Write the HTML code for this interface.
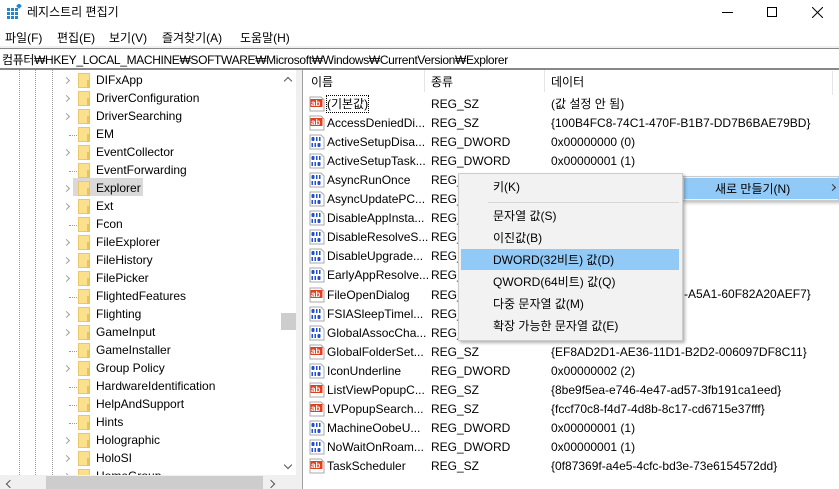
<!DOCTYPE html>
<html><head><meta charset="utf-8">
<style>
*{margin:0;padding:0;box-sizing:border-box}
body{width:839px;height:489px;overflow:hidden;background:#fff;font-family:"Liberation Sans","Noto Sans CJK KR",sans-serif;font-size:12px;color:#000;position:relative}
.a{position:absolute;white-space:nowrap}
.t{line-height:18px}
.fold{position:absolute;width:12px;height:15px;background:#fbe18e;border:1px solid #ecc862}
.fold:after{content:"";position:absolute;right:-1px;bottom:-1px;width:3px;height:8px;background:#e9c35a}
.chev{position:absolute;width:5px;height:5px;border-right:1.3px solid #a0a0a0;border-bottom:1.3px solid #a0a0a0;transform:rotate(-45deg)}
.dot{position:absolute;border-top:1px dotted #999;width:8px}
.vd{position:absolute;border-left:1px dotted #999;top:70px;height:405px}
.mi{position:absolute;left:493px;line-height:18px}
</style></head><body>
<svg class="a" style="left:6px;top:4px" width="16" height="16" viewBox="0 0 16 16"><rect x="1" y="4" width="11" height="11" fill="#1e88d6"/><g stroke="#fff" stroke-width="1"><line x1="4.5" y1="4" x2="4.5" y2="15"/><line x1="8.5" y1="4" x2="8.5" y2="15"/><line x1="1" y1="7.5" x2="12" y2="7.5"/><line x1="1" y1="11.5" x2="12" y2="11.5"/></g><rect x="11" y="0" width="4" height="4" fill="#1e88d6" transform="rotate(45 13 2)"/></svg>
<div class="a" style="left:27px;top:3px;font-size:12px">레지스트리 편집기</div>
<div class="a" style="left:722px;top:12px;width:11px;height:1px;background:#000"></div>
<div class="a" style="left:767px;top:7px;width:10px;height:10px;border:1px solid #000"></div>
<svg class="a" style="left:812px;top:7px" width="11" height="11"><path d="M0 0L11 11M11 0L0 11" stroke="#000" stroke-width="1"/></svg>
<div class="a" style="left:5px;top:29px">파일(F)</div>
<div class="a" style="left:57px;top:29px">편집(E)</div>
<div class="a" style="left:109px;top:29px">보기(V)</div>
<div class="a" style="left:162px;top:29px">즐겨찾기(A)</div>
<div class="a" style="left:240px;top:29px">도움말(H)</div>
<div class="a" style="left:0;top:46px;width:839px;height:3px;background:#f0f0f0"></div>
<div class="a" style="left:0;top:48px;width:839px;height:1px;background:#888"></div>
<div class="a" style="left:2px;top:51px;letter-spacing:-0.35px">컴퓨터₩HKEY_LOCAL_MACHINE₩SOFTWARE₩Microsoft₩Windows₩CurrentVersion₩Explorer</div>
<div class="a" style="left:0;top:68px;width:839px;height:2px;background:#888"></div>
<div class="vd" style="left:19px"></div><div class="vd" style="left:35px"></div><div class="vd" style="left:52px"></div>
<div class="a" style="left:73px;top:178px;width:70px;height:18px;background:#d9d9d9"></div>
<div id="tree"></div>
<div class="a" style="left:281px;top:70px;width:15px;height:405px;background:#fff"></div>
<div class="a" style="left:285px;top:78px;width:6px;height:6px;border-left:1.5px solid #555;border-top:1.5px solid #555;transform:rotate(45deg)"></div>
<div class="a" style="left:281px;top:313px;width:15px;height:17px;background:#cdcdcd"></div>
<div class="a" style="left:285px;top:462px;width:6px;height:6px;border-right:1.5px solid #555;border-bottom:1.5px solid #555;transform:rotate(45deg)"></div>
<div class="a" style="left:0;top:475px;width:281px;height:14px;background:#f0f0f0"></div>
<div class="a" style="left:46px;top:476px;width:217px;height:13px;background:#cdcdcd"></div>
<div class="a" style="left:7px;top:481px;width:6px;height:6px;border-left:1.5px solid #555;border-bottom:1.5px solid #555;transform:rotate(45deg)"></div>
<div class="a" style="left:268px;top:481px;width:6px;height:6px;border-right:1.5px solid #555;border-top:1.5px solid #555;transform:rotate(45deg)"></div>
<div class="a" style="left:281px;top:475px;width:15px;height:14px;background:#f0f0f0"></div>
<div class="a" style="left:296px;top:70px;width:6px;height:419px;background:#f0f0f0"></div>
<div class="a" style="left:302px;top:70px;width:1px;height:419px;background:#a0a0a0"></div>
<div class="a" style="left:311px;top:73px">이름</div>
<div class="a" style="left:431px;top:73px">종류</div>
<div class="a" style="left:551px;top:73px">데이터</div>
<div class="a" style="left:424px;top:70px;width:1px;height:22px;background:#e5e5e5"></div>
<div class="a" style="left:544px;top:70px;width:1px;height:22px;background:#e5e5e5"></div>
<div class="a" style="left:832px;top:71px;width:1px;height:24px;background:#e5e5e5"></div>
<div id="list"></div>
<div class="a" style="left:684px;top:287px;background:#fff">-A5A1-60F82A20AEF7}</div>
<div class="a" style="left:682px;top:176px;width:157px;height:25px;background:#f2f2f2;border:1px solid #ccc;box-shadow:2px 2px 3px rgba(0,0,0,.25)"></div>
<div class="a" style="left:684px;top:178px;width:155px;height:21px;background:#91c9f7"></div>
<div class="a" style="left:715px;top:180px">새로 만들기(N)</div>
<div class="a" style="left:830px;top:185px;width:5px;height:5px;border-right:1px solid #333;border-top:1px solid #333;transform:rotate(45deg)"></div>
<div class="a" style="left:458px;top:173px;width:225px;height:168px;background:#f2f2f2;border:1px solid #ccc;box-shadow:2px 2px 3px rgba(0,0,0,.3)"></div>
<div class="a" style="left:488px;top:202px;width:191px;height:1px;background:#d7d7d7"></div>
<div class="a" style="left:461px;top:249px;width:218px;height:21px;background:#91c9f7"></div>
<div class="mi" style="top:178px">키(K)</div>
<div class="mi" style="top:207px">문자열 값(S)</div>
<div class="mi" style="top:229px">이진값(B)</div>
<div class="mi" style="top:251px">DWORD(32비트) 값(D)</div>
<div class="mi" style="top:273px">QWORD(64비트) 값(Q)</div>
<div class="mi" style="top:295px">다중 문자열 값(M)</div>
<div class="mi" style="top:317px">확장 가능한 문자열 값(E)</div>
<script>
var tree=[["DIFxApp",1],["DriverConfiguration",1],["DriverSearching",1],["EM",0],["EventCollector",1],["EventForwarding",0],["Explorer",1],["Ext",1],["Fcon",0],["FileExplorer",1],["FileHistory",1],["FilePicker",1],["FlightedFeatures",0],["Flighting",1],["GameInput",1],["GameInstaller",0],["Group Policy",1],["HardwareIdentification",0],["HelpAndSupport",0],["Hints",0],["Holographic",1],["HoloSI",1],["HomeGroup",1]];
var h="";tree.forEach(function(e,i){var y=71+i*18;
h+='<div class="fold" style="left:78px;top:'+(y+2)+'px"></div>';
h+=e[1]?'<div class="chev" style="left:64px;top:'+(y+7)+'px"></div>':'<div class="dot" style="left:69px;top:'+(y+10)+'px"></div>';
h+='<div class="a t" style="left:96px;top:'+y+'px">'+e[0]+'</div>';});
document.getElementById("tree").innerHTML=h;
var ab='<svg width="16" height="16" viewBox="0 0 16 16"><path d="M1 1h11l3 3v11H1z" fill="#fff" stroke="#aaa"/><rect x="1.5" y="3" width="12" height="8" fill="#e04020"/><text x="2" y="10" font-size="8" font-weight="bold" fill="#fff" font-family="Liberation Sans">ab</text></svg>';
var dw='<svg width="16" height="16" viewBox="0 0 16 16"><path d="M1 1h11l3 3v11H1z" fill="#fff" stroke="#aaa"/><g fill="#2050d0"><rect x="2.5" y="3" width="3" height="4" rx="1"/><rect x="7" y="3" width="1.5" height="4"/><rect x="10" y="3" width="1.5" height="4"/><rect x="2.5" y="9" width="1.5" height="4"/><rect x="5.5" y="9" width="1.5" height="4"/><rect x="8.5" y="9" width="3" height="4" rx="1"/></g></svg>';
var L=[["(기본값)","REG_SZ","(값 설정 안 됨)"],["AccessDeniedDi...","REG_SZ","{100B4FC8-74C1-470F-B1B7-DD7B6BAE79BD}"],["ActiveSetupDisa...","REG_DWORD","0x00000000 (0)"],["ActiveSetupTask...","REG_DWORD","0x00000001 (1)"],["AsyncRunOnce","REG_DWORD",""],["AsyncUpdatePC...","REG_DWORD",""],["DisableAppInsta...","REG_DWORD",""],["DisableResolveS...","REG_DWORD",""],["DisableUpgrade...","REG_DWORD",""],["EarlyAppResolve...","REG_DWORD",""],["FileOpenDialog","REG_SZ",""],["FSIASleepTimel...","REG_DWORD",""],["GlobalAssocCha...","REG_DWORD",""],["GlobalFolderSet...","REG_SZ","{EF8AD2D1-AE36-11D1-B2D2-006097DF8C11}"],["IconUnderline","REG_DWORD","0x00000002 (2)"],["ListViewPopupC...","REG_SZ","{8be9f5ea-e746-4e47-ad57-3fb191ca1eed}"],["LVPopupSearch...","REG_SZ","{fccf70c8-f4d7-4d8b-8c17-cd6715e37fff}"],["MachineOobeU...","REG_DWORD","0x00000001 (1)"],["NoWaitOnRoam...","REG_DWORD","0x00000001 (1)"],["TaskScheduler","REG_SZ","{0f87369f-a4e5-4cfc-bd3e-73e6154572dd}"]];
h="";L.forEach(function(e,i){var y=95+i*19.05;
h+='<div class="a" style="left:309px;top:'+(y+1)+'px">'+(e[1]=="REG_SZ"?ab:dw)+'</div>';
h+='<div class="a t" style="left:327px;top:'+y+'px;'+(i==0?'outline:1px dotted #000;outline-offset:-1px;padding:0 1px;left:326px':'')+'">'+e[0]+'</div>';
h+='<div class="a t" style="left:431px;top:'+y+'px">'+e[1]+'</div>';
h+='<div class="a t" style="left:551px;top:'+y+'px">'+e[2]+'</div>';});
document.getElementById("list").innerHTML=h;
</script>
</body></html>
